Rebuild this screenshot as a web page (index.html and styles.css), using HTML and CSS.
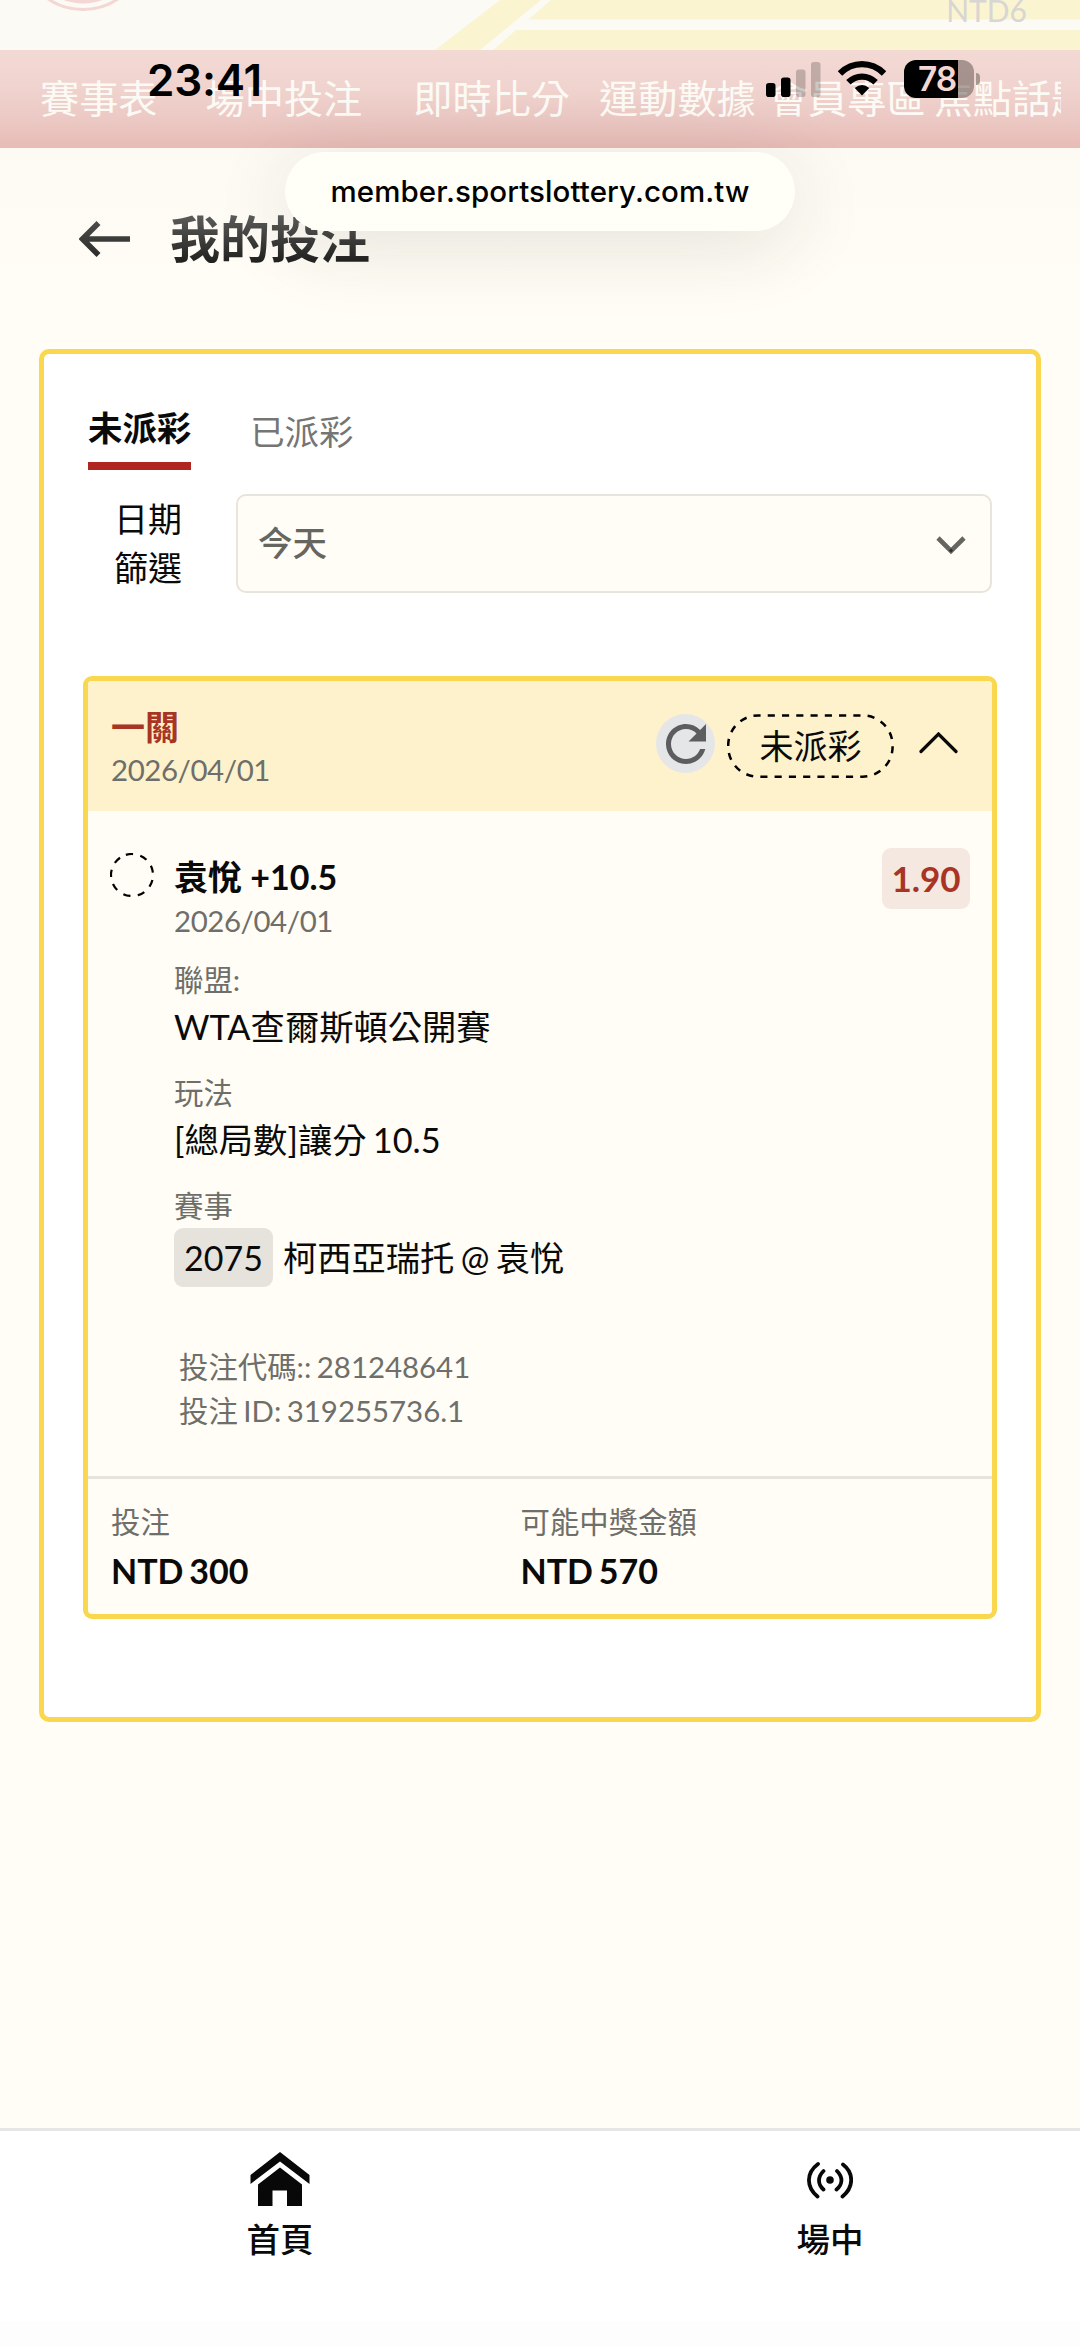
FILE: index.html
```html
<!DOCTYPE html>
<html lang="zh-Hant">
<head>
<meta charset="utf-8">
<title>我的投注</title>
<link rel="stylesheet" href="styles.css">
</head>
<body>
<div class="page">
  <header class="brand">
    <svg class="brand-art" width="1080" height="50" viewBox="0 0 1080 50">
      <circle cx="83" cy="-53" r="62.5" fill="none" stroke="#f4d6d3" stroke-width="3"/>
      <circle cx="83" cy="-53" r="56.5" fill="#f4d6d3"/>
      <path d="M500 0H541L480 50H435Z" fill="#faf4d1"/>
      <path d="M551 0H1080V19.5H528.5Z" fill="#faf4d1"/>
      <path d="M516 30H1080V50H493Z" fill="#faf4d1"/>
    </svg>
    <span class="balance">NTD6</span>
  </header>
  <nav class="topnav">
    <a class="n1">賽事表</a><a class="n2">場中投注</a><a class="n3">即時比分</a><a class="n4">運動數據</a><a class="n5">會員專區</a><a>焦點話題</a>
  </nav>

  <div class="titlebar">
    <svg class="back" width="51" height="36" viewBox="0 0 51 36" fill="none" stroke="url(#ink)" stroke-width="5.6">
      <defs><linearGradient id="ink" gradientUnits="userSpaceOnUse" x1="0" y1="0" x2="0" y2="36"><stop offset="0" stop-color="#4c4c4a"/><stop offset="1" stop-color="#2c2c2a"/></linearGradient></defs>
      <path d="M3 18H51M19.500 2L3.500 18L19.500 34"/>
    </svg>
    <h1>我的投注</h1>
  </div>

  <main class="panel">
    <div class="tabs">
      <a class="tab active">未派彩</a>
      <a class="tab">已派彩</a>
    </div>
    <div class="filter">
      <label>日期<br>篩選</label>
      <div class="select">
        <span>今天</span>
        <svg width="30" height="18" viewBox="0 0 30 18" fill="none" stroke="#666661" stroke-width="4.600"><path d="M2 2L15 15L28 2"/><path d="M13 14.500L15 12.500L17 14.500L15 16.500Z" fill="#2d2d2b" stroke="none"/></svg>
      </div>
    </div>

    <section class="bet">
      <div class="bet-head">
        <div class="bet-name">
          <h2>一關</h2>
          <p class="muted date">2026/04/01</p>
        </div>
        <div class="refresh">
          <svg width="60" height="60" viewBox="0 0 24 24"><path fill="#5b5d5f" d="M17.650 6.350C16.200 4.900 14.210 4 12 4c-4.420 0-7.990 3.580-7.990 8s3.570 8 7.990 8c3.730 0 6.840-2.550 7.730-6h-2.080c-.82 2.330-3.040 4-5.650 4-3.310 0-6-2.690-6-6s2.690-6 6-6c1.660 0 3.140.69 4.220 1.780L13 11h7V4l-2.350 2.350z"/></svg>
        </div>
        <div class="status">
          <svg width="167" height="64" viewBox="0 0 167 64"><rect x="1.200" y="1.400" width="164.400" height="61.300" rx="30" fill="none" stroke="#000" stroke-width="2.500" stroke-dasharray="7.500 7.500" stroke-dashoffset="5" pathLength="420"/></svg>
          <span>未派彩</span>
        </div>
        <svg class="collapse" width="39" height="22" viewBox="0 0 39 22" fill="none" stroke="#0a0a0a" stroke-width="3.200" stroke-linecap="round"><path d="M2 19.500L19.500 2L37 19.500"/></svg>
      </div>

      <div class="bet-body">
        <svg class="pending" width="44" height="44" viewBox="0 0 44 44"><circle cx="22" cy="22" r="21" fill="none" stroke="#000" stroke-width="2.200" stroke-dasharray="7.300 7.360" transform="rotate(-107 22 22)"/></svg>
        <div class="leg">
          <h3>袁悅 +10.5</h3>
          <p class="muted date">2026/04/01</p>
          <dl>
            <dt>聯盟:</dt><dd>WTA查爾斯頓公開賽</dd>
            <dt>玩法</dt><dd>[總局數]讓分 10.5</dd>
            <dt>賽事</dt><dd class="match"><span class="code">2075</span><span class="teams">柯西亞瑞托 @ 袁悅</span></dd>
          </dl>
          <div class="ids">
            <p>投注代碼:: 281248641</p>
            <p>投注 ID: 319255736.1</p>
          </div>
        </div>
        <span class="odds">1.90</span>
      </div>

      <div class="bet-foot">
        <div><p class="muted">投注</p><strong>NTD 300</strong></div>
        <div><p class="muted">可能中獎金額</p><strong>NTD 570</strong></div>
      </div>
    </section>
  </main>

  <nav class="bottomnav">
    <a class="home">
      <svg width="60" height="55" viewBox="0 0 60 55" fill="#080808"><path d="M30 0L59.500 23V32L30 9.500L.5 32V23Z"/><path d="M30 15.500L52 32.500V54H37V38.500H22.500V54H8V32.500Z"/></svg>
      <span>首頁</span>
    </a>
    <a class="live">
      <svg width="46" height="55" viewBox="0 0 46 55" fill="none" stroke="#080808" stroke-width="3.800" stroke-linecap="round"><circle cx="23" cy="28" r="3.800" fill="#080808" stroke="none"/><path d="M11 12C-1 21-1 35 10.500 44.500M36 12.500C47 21 47 35 35.500 44.500M16.500 19C10.500 25 10.500 32 16.500 37.500M30 19C36 25 36 32 29.500 37.500"/></svg>
      <span>場中</span>
    </a>
  </nav>

  <div class="statusbar">
    <span class="clock">23:41</span>
    <svg class="signal" width="55" height="36" viewBox="0 0 55 36"><rect x="0" y="21" width="9.500" height="14" rx="2.800"/><rect x="15" y="15.500" width="9.500" height="19.500" rx="2.800"/><rect x="30" y="7.500" width="9.500" height="27.500" rx="2.800" opacity=".2"/><rect x="45" y="0" width="9.500" height="35" rx="2.800" opacity=".2"/></svg>
    <svg class="wifi" width="48" height="36" viewBox="0 0 48 36" fill="none" stroke="#000" stroke-width="6.200"><path d="M2 12.500C14.500 .1 33.500 .1 46 12.500"/><path d="M10.400 21.300C18 13.600 30 13.600 37.600 21.300"/><path d="M24 34.500L16.700 27Q24 21 31.300 27Z" fill="#000" stroke="none"/></svg>
    <div class="battery"><span>78</span></div>
    <i class="nub"></i>
  </div>
  <div class="urlpill">member.sportslottery.com.tw</div>
</div>
</body>
</html>
```
FILE: styles.css
```css
* { box-sizing: border-box; margin: 0; padding: 0; }

body {
  font-family: Lato, "Noto Sans CJK TC", sans-serif;
  font-size: 34px;
  color: #0a0a0a;
  background: #fffdf5;
}

svg { display: block; flex: none; }

.page {
  position: relative;
  display: flex;
  flex-direction: column;
  width: 1080px;
  height: 2347px;
  overflow: hidden;
  background: linear-gradient(#fdfaf4 148px, #fffdf5 300px);
}

/* faded site header */
.brand {
  position: relative;
  height: 50px;
  background: #fcfaf5;
  display: flex;
  justify-content: flex-end;
}
.brand-art { position: absolute; left: 0; top: 0; }
.balance {
  position: relative;
  margin-right: 53px;
  margin-top: -9px;
  height: 38px;
  font-size: 30px;
  line-height: 38px;
  color: #d8d6d2;
}
.topnav {
  display: flex;
  height: 98px;
  padding: 0 19px 0 40px;
  background: linear-gradient(#f3d9d4, #f0d3ce 40%, #ebc7c2 75%, #e8bbb6);
}
.topnav a {
  flex: none;
  font-size: 39.200px;
  font-weight: 400;
  line-height: 96px;
  color: #fcfaf5;
  white-space: nowrap;
}
.topnav a:last-child { width: 127px; overflow: hidden; }
.n1 { margin-right: 48px; }
.n2 { margin-right: 51px; }
.n3 { margin-right: 29px; }
.n4 { margin-right: 13px; }
.n5 { margin-right: 8px; }

.titlebar {
  display: flex;
  align-items: flex-start;
  height: 201px;
  padding-left: 79px;
}
.back { margin-top: 73px; }
h1 {
  margin-left: 40px;
  margin-top: 61px;
  height: 60px;
  font-size: 50px;
  font-weight: 700;
  line-height: 60px;
  background: linear-gradient(#5a5a58 8px, #20201f 54px);
  -webkit-background-clip: text;
  background-clip: text;
  color: transparent;
}

.panel {
  width: 1002px;
  height: 1373px;
  margin: 0 39px;
  padding: 49px 39px 0;
  border: 5px solid #f9d850;
  border-radius: 10px;
  background: #fff;
}
.tabs { display: flex; padding-left: 5px; gap: 59px; height: 67px; }
.tab {
  padding-bottom: 9px;
  margin-top: 4px;
  font-size: 34.400px;
  line-height: 50px;
  color: #757573;
}
.tab.active {
  margin-top: 0;
  color: #0a0a0a;
  font-weight: 700;
  border-bottom: 8px solid #b02621;
}
.filter { display: flex; margin-top: 24px; padding-left: 31px; }
.filter label {
  width: 122px;
  font-size: 34px;
  line-height: 49px;
}
.select {
  display: flex;
  align-items: center;
  justify-content: space-between;
  width: 756px;
  height: 99px;
  padding: 0 24px 0 20px;
  border: 2.500px solid #e7e4dd;
  border-radius: 10px;
  background: #fffdf5;
  font-weight: 500;
  font-size: 34.500px;
  color: #666661;
}
.select span { line-height: 49px; margin-top: -3px; }
.select svg { margin-top: 3px; }

.bet {
  width: 914px;
  height: 943px;
  margin-top: 83px;
  border: 5px solid #f9d850;
  border-radius: 9px;
  background: #fffdf5;
  overflow: hidden;
}
.bet-head {
  display: flex;
  height: 130px;
  padding: 27px 34px 0 23px;
  background: #fdf2cb;
}
.bet-name { flex: 1; }
h2 {
  font-size: 34px;
  font-weight: 700;
  line-height: 43px;
  margin-top: -3px;
  color: #a83524;
}
.muted, dt, .ids { font-size: 29.400px; line-height: 44px; color: #6e6e6a; }
.date { letter-spacing: -.4px; }
.bet-head .muted { line-height: 38px; margin-top: 3px; }
.refresh {
  display: flex;
  align-items: center;
  justify-content: center;
  width: 59px;
  height: 59px;
  margin-top: 6px;
  border-radius: 50%;
  background: #e5e6e8;
}
.status {
  position: relative;
  width: 167px;
  height: 64px;
  margin: 6px 25px 0 12px;
  text-align: center;
  font-size: 34px;
  line-height: 64px;
}
.status svg { position: absolute; left: 0; top: 0; }
.collapse { margin-top: 24px; }

.bet-body {
  display: flex;
  align-items: flex-start;
  height: 665px;
  padding: 42px 22px 0 22px;
}
.leg { flex: 1; margin: 2px 0 0 20px; }
h3 { font-size: 34px; font-weight: 700; line-height: 44px; }
dl { margin-top: 15px; }
dd {
  margin-bottom: 19px;
  font-size: 34.300px;
  line-height: 50px;
  word-spacing: -2.500px;
}
dd.match {
  display: flex;
  gap: 10px;
  margin: 0;
  line-height: 59px;
}
.code {
  padding: 0 10px;
  border-radius: 9px;
  background: #e6e3dd;
  font-size: 34px;
}
.ids { margin: 58px 0 0 5px; word-spacing: -2px; }
.odds {
  width: 88px;
  height: 61px;
  margin-top: -5px;
  border-radius: 9px;
  background: #f5e8e0;
  color: #a83524;
  font-size: 35px;
  font-weight: 700;
  line-height: 61px;
  text-align: center;
}
.bet-foot {
  display: flex;
  padding: 21px 0 0 23px;
  border-top: 3px solid #e7e4de;
}
.bet-foot > div { width: 409.500px; }
.bet-foot strong {
  display: block;
  margin-top: 2px;
  line-height: 50px;
  word-spacing: -2.500px;
}

.bottomnav {
  display: flex;
  height: 219px;
  margin-top: auto;
  border-top: 3px solid #e6e6e6;
  background: linear-gradient(#fff 190px, #fdfdfd 190px);
}
.bottomnav a {
  display: flex;
  flex: none;
  flex-direction: column;
  align-items: center;
  width: 560px;
  padding-top: 21px;
  font-size: 33.500px;
  font-weight: 500;
}
.bottomnav .live { width: 540px; margin-right: -20px; }
.bottomnav span { margin-top: 7px; line-height: 50px; }

/* system chrome floating over the page */
.statusbar {
  position: absolute;
  left: 147px;
  top: 50px;
  display: flex;
  font-family: Inter, sans-serif;
}
.clock {
  width: 619px;
  font-size: 44px;
  font-weight: 600;
  line-height: 60px;
  letter-spacing: -.2px;
  color: #000;
}
.signal { margin: 12px 17px 0 0; }
.wifi { margin: 11px 18px 0 0; }
.battery {
  width: 70px;
  height: 38px;
  margin-top: 10px;
  border-radius: 12px;
  background: linear-gradient(90deg, #000 54px, rgba(90, 80, 76, .5) 54px);
  color: #f2d7d2;
  font-size: 33.500px;
  font-weight: 600;
  line-height: 38px;
  padding-left: 14px;
  letter-spacing: -1px;
}
.nub {
  width: 4px;
  height: 12px;
  margin: 23px 0 0 2px;
  border-radius: 0 5px 5px 0;
  background: #a89690;
}
.urlpill {
  position: absolute;
  left: 285px;
  top: 152px;
  width: 510px;
  height: 79px;
  border-radius: 40px;
  background: #fffff8;
  box-shadow: 0 14px 80px rgba(40, 40, 30, .12);
  font: 500 29.500px/79px Inter, sans-serif;
  letter-spacing: .1px;
  text-align: center;
  color: #000;
}
```
